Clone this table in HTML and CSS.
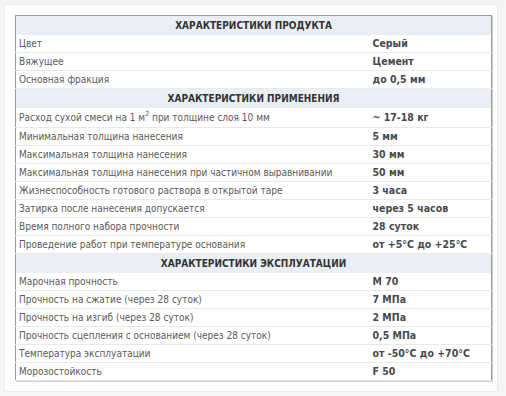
FILE: index.html
```html
<!DOCTYPE html>
<html lang="ru">
<head>
<meta charset="utf-8">
<link rel="stylesheet" href="styles.css">
</head>
<body>
<div class="card">
<table class="spec">
<colgroup><col class="c-name"><col class="c-val"></colgroup>
<tbody>
<tr class="head"><th colspan="2">ХАРАКТЕРИСТИКИ ПРОДУКТА</th></tr>
<tr><td>Цвет</td><td class="val">Серый</td></tr>
<tr><td>Вяжущее</td><td class="val">Цемент</td></tr>
<tr><td>Основная фракция</td><td class="val">до 0,5 мм</td></tr>
<tr class="head"><th colspan="2">ХАРАКТЕРИСТИКИ ПРИМЕНЕНИЯ</th></tr>
<tr class="tall"><td>Расход сухой смеси на 1 м<sup>2</sup> при толщине слоя 10 мм</td><td class="val">~ 17-18 кг</td></tr>
<tr><td>Минимальная толщина нанесения</td><td class="val">5 мм</td></tr>
<tr><td>Максимальная толщина нанесения</td><td class="val">30 мм</td></tr>
<tr><td>Максимальная толщина нанесения при частичном выравнивании</td><td class="val">50 мм</td></tr>
<tr><td>Жизнеспособность готового раствора в открытой таре</td><td class="val">3 часа</td></tr>
<tr><td>Затирка после нанесения допускается</td><td class="val">через 5 часов</td></tr>
<tr><td>Время полного набора прочности</td><td class="val">28 суток</td></tr>
<tr><td>Проведение работ при температуре основания</td><td class="val">от +5°С до +25°С</td></tr>
<tr class="head"><th colspan="2">ХАРАКТЕРИСТИКИ ЭКСПЛУАТАЦИИ</th></tr>
<tr><td>Марочная прочность</td><td class="val">М 70</td></tr>
<tr><td>Прочность на сжатие (через 28 суток)</td><td class="val">7 МПа</td></tr>
<tr><td>Прочность на изгиб (через 28 суток)</td><td class="val">2 МПа</td></tr>
<tr><td>Прочность сцепления с основанием (через 28 суток)</td><td class="val">0,5 МПа</td></tr>
<tr><td>Температура эксплуатации</td><td class="val">от -50°С до +70°С</td></tr>
<tr><td>Морозостойкость</td><td class="val">F 50</td></tr>
</tbody>
</table>
</div>
</body>
</html>
```
FILE: styles.css
```css
html, body {
  margin: 0;
  padding: 0;
}
body {
  background: #f5f5f5;
  width: 506px;
  height: 396px;
  font-family: "DejaVu Sans Condensed", "DejaVu Sans", sans-serif;
}
.card {
  margin: 4px 8px 6px 4px;
  padding: 10px 7px 10px 10px;
  background: #ffffff;
  border: 1px solid #ececec;
  border-radius: 3px;
  height: 366px;
}
.spec {
  border-collapse: collapse;
  width: 476px;
  border: 1px solid #9c9c9c;
  box-shadow: 1px 1px 0 #cfcfcf;
  table-layout: fixed;
}
.c-name { width: 355px; }
.c-val { width: 121px; }
.spec td {
  height: 17px;
  padding: 0 3px;
  font-size: 10px;
  line-height: 13px;
  color: #5a5a5a;
  border-bottom: 1px solid #e9e9e9;
  vertical-align: middle;
  white-space: nowrap;
}
.spec td.val {
  font-size: 10.5px;
  font-weight: bold;
  color: #454a50;
  padding-left: 2px;
}
.spec tr.tall td {
  height: 19px;
}
.spec sup {
  font-size: 7px;
  line-height: 0;
  vertical-align: 5px;
}
.spec th {
  height: 19px;
  padding: 0;
  background: #eaeff5;
  color: #333;
  font-size: 10px;
  line-height: 13px;
  font-weight: bold;
  text-align: center;
  vertical-align: middle;
}
```
